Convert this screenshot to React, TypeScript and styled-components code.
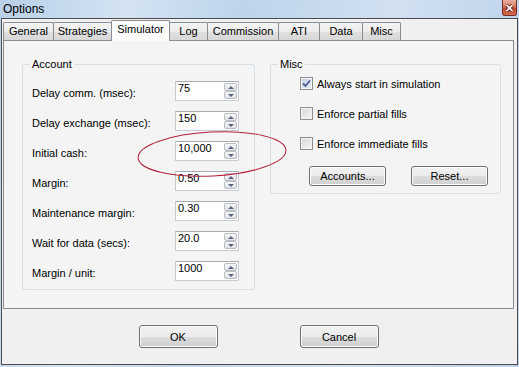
import { Fragment } from "react";
import styled, { createGlobalStyle } from "styled-components";

const GlobalStyle = createGlobalStyle`
  html, body {
    margin: 0;
    padding: 0;
  }
  body {
    width: 519px;
    height: 367px;
    overflow: hidden;
    font-family: "Liberation Sans", Arial, sans-serif;
    font-size: 11px;
    color: #000;
  }
`;

const Window = styled.div`
  position: relative;
  width: 519px;
  height: 367px;
  display: flex;
  flex-direction: column;
  background: linear-gradient(
    100deg,
    #b9d0e8 0%,
    #d3e3f3 22%,
    #bed4ea 42%,
    #d0e0f1 68%,
    #b9d0e8 100%
  );
`;

const TitleBar = styled.div`
  height: 18px;
  display: flex;
  align-items: flex-start;
  justify-content: space-between;
`;

const Title = styled.span`
  font-size: 12px;
  line-height: 18px;
  padding-left: 3px;
  color: #000;
`;

const CloseButton = styled.div`
  width: 15px;
  height: 16px;
  margin-right: 2px;
  box-sizing: border-box;
  border: 1px solid #7a2d26;
  border-top: none;
  border-radius: 0 0 3px 3px;
  background: linear-gradient(#eab0a2, #d7775f 45%, #c24a35 55%, #d0704f);
  display: flex;
  align-items: center;
  justify-content: center;
`;

const Client = styled.div`
  flex: 1;
  margin: 0 1px 2px 1px;
  border: 1px solid #4d4d4d;
  background: #f0f0f0;
  display: flex;
  flex-direction: column;
  padding: 1px 3px 0 1px;
`;

const TabStrip = styled.div`
  display: flex;
  align-items: flex-end;
  height: 20px;
`;

const Tab = styled.div<{ $w: number; $active?: boolean }>`
  position: relative;
  box-sizing: border-box;
  width: ${(p) => p.$w}px;
  height: ${(p) => (p.$active ? 21 : 18)}px;
  margin-right: -1px;
  margin-bottom: ${(p) => (p.$active ? -1 : 0)}px;
  z-index: ${(p) => (p.$active ? 2 : 1)};
  border: 1px solid #898c95;
  border-bottom: none;
  border-radius: 2px 2px 0 0;
  padding-top: 2px;
  line-height: 13px;
  text-align: center;
  white-space: nowrap;
  background: ${(p) =>
    p.$active
      ? "#fcfcfc"
      : "linear-gradient(#f4f4f4 0%, #ececec 50%, #e0e0e0 51%, #d7d7d7 100%)"};
`;

const TabPanel = styled.div`
  box-sizing: border-box;
  height: 269px;
  border: 1px solid #898c95;
  background: #f4f4f4;
  padding: 17px 0 0 18px;
  display: flex;
  align-items: flex-start;
  gap: 15px;
`;

const Group = styled.fieldset<{ $w: number }>`
  box-sizing: border-box;
  width: ${(p) => p.$w}px;
  min-inline-size: 0;
  margin: 0;
  border: 1px solid #d5dfe5;
  border-radius: 3px;
`;

const AccountGroup = styled(Group)`
  padding: 10px 15px 8px 9px;
`;

const MiscGroup = styled(Group)`
  padding: 5px 9px 7px 9px;
`;

const Legend = styled.legend`
  padding: 0 2px;
  margin-left: -2px;
  line-height: 13px;
  color: #000;
`;

const FieldGrid = styled.div`
  display: grid;
  grid-template-columns: 143px 64px;
  row-gap: 10px;
`;

const FieldLabel = styled.div`
  padding-top: 6px;
  line-height: 13px;
  white-space: nowrap;
`;

const SpinBox = styled.div`
  box-sizing: border-box;
  width: 64px;
  height: 20px;
  display: flex;
  background: #fff;
  border: 1px solid #c6cad2;
  border-top-color: #a7abb3;
`;

const SpinText = styled.div`
  flex: 1;
  padding-left: 2px;
  line-height: 13px;
`;

const SpinButtons = styled.div`
  width: 13px;
  margin: 1px;
  display: flex;
  flex-direction: column;
`;

const SpinButton = styled.div`
  flex: 1;
  box-sizing: border-box;
  border: 1px solid #b9bdc5;
  border-radius: 2px;
  background: linear-gradient(#f6f6f6, #e2e3e6);
  display: flex;
  align-items: center;
  justify-content: center;
`;

const Arrow = styled.span<{ $down?: boolean }>`
  width: 0;
  height: 0;
  border-left: 3px solid transparent;
  border-right: 3px solid transparent;
  ${(p) =>
    p.$down
      ? "border-top: 3px solid #55657f;"
      : "border-bottom: 3px solid #55657f;"}
`;

const CheckList = styled.div`
  display: flex;
  flex-direction: column;
  gap: 15px;
  padding-left: 20px;
`;

const CheckRow = styled.div`
  display: flex;
  align-items: center;
  gap: 4px;
  height: 15px;
  white-space: nowrap;
`;

const CheckBox = styled.span<{ $checked?: boolean }>`
  box-sizing: border-box;
  width: 13px;
  height: 13px;
  border: 1px solid #8e8f8f;
  box-shadow: inset 0 0 0 1px #f4f4f4;
  background: ${(p) =>
    p.$checked
      ? "linear-gradient(135deg, #c3cfe4, #e9eef6)"
      : "linear-gradient(135deg, #d6d6d6, #f7f7f7)"};
  display: flex;
  align-items: center;
  justify-content: center;
`;

const GroupButtons = styled.div`
  display: flex;
  gap: 25px;
  margin-top: 15px;
  padding-left: 29px;
`;

const Button = styled.button<{ $w: number; $h: number }>`
  box-sizing: border-box;
  width: ${(p) => p.$w}px;
  height: ${(p) => p.$h}px;
  padding: 0;
  font-family: "Liberation Sans", Arial, sans-serif;
  font-size: 11px;
  color: #000;
  border: 1px solid #707070;
  border-radius: 3px;
  box-shadow: inset 0 0 0 1px #fbfbfb;
  background: linear-gradient(#f2f2f2 0%, #ebebeb 50%, #dddddd 51%, #cfcfcf 100%);
`;

const ButtonBar = styled.div`
  display: flex;
  justify-content: center;
  gap: 82px;
  padding-top: 16px;
`;

const Annotation = styled.svg`
  position: absolute;
  left: 0;
  top: 0;
  pointer-events: none;
`;

const tabs = [
  { label: "General", w: 51 },
  { label: "Strategies", w: 59 },
  { label: "Simulator", w: 59, active: true },
  { label: "Log", w: 39 },
  { label: "Commission", w: 72 },
  { label: "ATI", w: 42 },
  { label: "Data", w: 44 },
  { label: "Misc", w: 39 },
];

const fields = [
  { label: "Delay comm. (msec):", value: "75" },
  { label: "Delay exchange (msec):", value: "150" },
  { label: "Initial cash:", value: "10,000" },
  { label: "Margin:", value: "0.50" },
  { label: "Maintenance margin:", value: "0.30" },
  { label: "Wait for data (secs):", value: "20.0" },
  { label: "Margin / unit:", value: "1000" },
];

const checks = [
  { label: "Always start in simulation", checked: true },
  { label: "Enforce partial fills", checked: false },
  { label: "Enforce immediate fills", checked: false },
];

function Spinner({ value }: { value: string }) {
  return (
    <SpinBox>
      <SpinText>{value}</SpinText>
      <SpinButtons>
        <SpinButton>
          <Arrow />
        </SpinButton>
        <SpinButton>
          <Arrow $down />
        </SpinButton>
      </SpinButtons>
    </SpinBox>
  );
}

function App() {
  return (
    <Window>
      <GlobalStyle />
      <TitleBar>
        <Title>Options</Title>
        <CloseButton>
          <svg width="9" height="8" viewBox="0 0 9 8">
            <path d="M1.5 1 L7.5 7 M7.5 1 L1.5 7" stroke="#5b1d16" strokeWidth="3.2" />
            <path d="M1.5 1 L7.5 7 M7.5 1 L1.5 7" stroke="#fff" strokeWidth="1.7" />
          </svg>
        </CloseButton>
      </TitleBar>

      <Client>
        <TabStrip>
          {tabs.map((t) => (
            <Tab key={t.label} $w={t.w} $active={t.active}>
              {t.label}
            </Tab>
          ))}
        </TabStrip>

        <TabPanel>
          <AccountGroup $w={233}>
            <Legend>Account</Legend>
            <FieldGrid>
              {fields.map((f) => (
                <Fragment key={f.label}>
                  <FieldLabel>{f.label}</FieldLabel>
                  <Spinner value={f.value} />
                </Fragment>
              ))}
            </FieldGrid>
          </AccountGroup>

          <MiscGroup $w={231}>
            <Legend>Misc</Legend>
            <CheckList>
              {checks.map((c) => (
                <CheckRow key={c.label}>
                  <CheckBox $checked={c.checked}>
                    {c.checked && (
                      <svg width="9" height="9" viewBox="0 0 9 9">
                        <path
                          d="M1 4.5 L3.5 7 L8 1.5"
                          fill="none"
                          stroke="#4a5c93"
                          strokeWidth="1.8"
                        />
                      </svg>
                    )}
                  </CheckBox>
                  {c.label}
                </CheckRow>
              ))}
            </CheckList>
            <GroupButtons>
              <Button $w={77} $h={20}>Accounts...</Button>
              <Button $w={77} $h={20}>Reset...</Button>
            </GroupButtons>
          </MiscGroup>
        </TabPanel>

        <ButtonBar>
          <Button $w={79} $h={23}>OK</Button>
          <Button $w={79} $h={23}>Cancel</Button>
        </ButtonBar>
      </Client>

      <Annotation width="519" height="367" viewBox="0 0 519 367">
        <ellipse
          cx="212"
          cy="154"
          rx="74"
          ry="22"
          transform="rotate(-3 212 154)"
          fill="none"
          stroke="#b3203a"
          strokeWidth="1"
        />
      </Annotation>
    </Window>
  );
}

export default App;
